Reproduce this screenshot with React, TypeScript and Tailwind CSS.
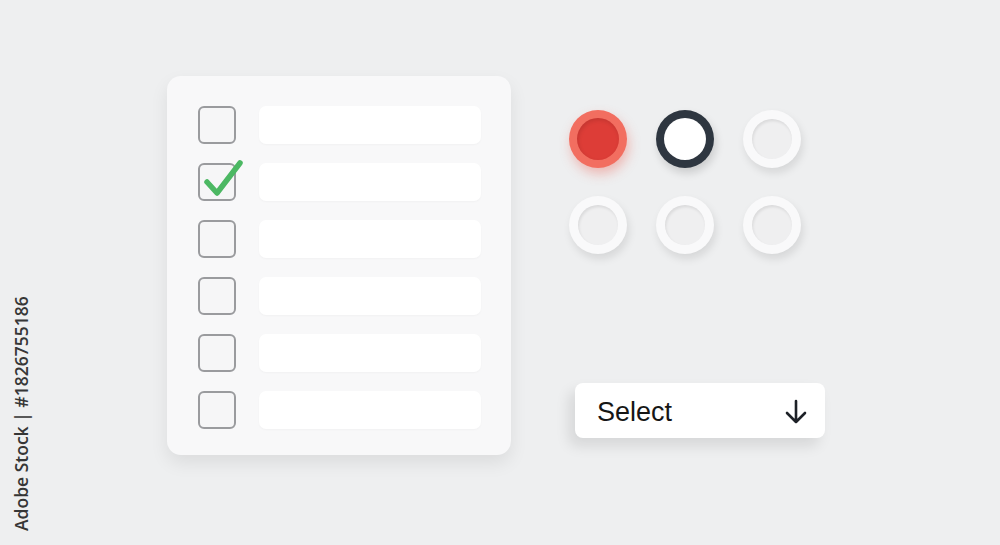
import React from "react";

const rows = [false, true, false, false, false, false];

function CheckRow({ checked }: { checked: boolean }) {
  return (
    <div className="flex items-center gap-[23px]">
      <div className="relative h-[38px] w-[38px] shrink-0 rounded-[6px] border-[2.5px] border-[#9a9b9e] bg-[#f6f6f7]">
        {checked && (
          <svg
            className="absolute left-[3px] top-[-6px] overflow-visible"
            width="44"
            height="40"
            viewBox="0 0 44 40"
          >
            <path
              d="M4 23 L14 34 L37 4"
              fill="none"
              stroke="#4cb863"
              strokeWidth="5.5"
              strokeLinecap="round"
              strokeLinejoin="round"
            />
          </svg>
        )}
      </div>
      <div className="h-[38px] w-[222px] rounded-[7px] bg-white shadow-[0_1px_2px_rgba(0,0,0,0.03)]" />
    </div>
  );
}

function Ring() {
  return (
    <div className="flex h-[58px] w-[58px] items-center justify-center rounded-full bg-[#f9f9fa] shadow-[2px_5px_8px_rgba(0,0,0,0.10)]">
      <div className="h-[40px] w-[40px] rounded-full bg-[#efeff0] shadow-[inset_1px_2px_3px_rgba(0,0,0,0.09)]" />
    </div>
  );
}

export default function App() {
  return (
    <div
      className="relative h-[545px] w-[1000px] overflow-hidden bg-[#eeeff0]"
      style={{ fontFamily: "'Liberation Sans', Arial, sans-serif" }}
    >
      <div className="flex pl-[167px] pt-[76px]">
        {/* checklist card */}
        <div className="flex h-[379px] w-[344px] flex-col gap-[19px] rounded-[14px] bg-[#f8f8f9] pl-[31px] pt-[30px] shadow-[0_8px_18px_rgba(0,0,0,0.08)]">
          {rows.map((c, i) => (
            <CheckRow key={i} checked={c} />
          ))}
        </div>

        {/* radios + select */}
        <div className="ml-[58px] flex flex-col pt-[34px]">
          <div className="grid grid-cols-[58px_58px_58px] gap-x-[29px] gap-y-[28px]">
            <div className="flex h-[58px] w-[58px] items-center justify-center rounded-full bg-[#f26e60] shadow-[2px_6px_12px_rgba(235,80,65,0.35)]">
              <div className="h-[42px] w-[42px] rounded-full bg-[#dd3d37] shadow-[inset_1px_2px_4px_rgba(0,0,0,0.12)]" />
            </div>
            <div className="flex h-[58px] w-[58px] items-center justify-center rounded-full bg-[#2e3640] shadow-[2px_5px_8px_rgba(0,0,0,0.15)]">
              <div className="h-[42px] w-[42px] rounded-full bg-white" />
            </div>
            <Ring />
            <Ring />
            <Ring />
            <Ring />
          </div>

          <div className="ml-[6px] mt-[129px] flex h-[55px] w-[250px] items-center justify-between rounded-[8px] bg-white pl-[22px] pr-[16px] pt-[3px] shadow-[-6px_8px_14px_rgba(0,0,0,0.10)]">
            <span className="text-[27px] leading-none text-[#161616]">Select</span>
            <svg width="26" height="28" viewBox="0 0 26 28">
              <path
                d="M13 3 V24 M4 15 L13 24 L22 15"
                fill="none"
                stroke="#1d2127"
                strokeWidth="2.6"
                strokeLinecap="round"
                strokeLinejoin="round"
              />
            </svg>
          </div>
        </div>
      </div>

      {/* stock credit */}
      <div
        className="absolute left-[9px] top-[531px] origin-top-left -rotate-90 whitespace-nowrap text-[17.5px] font-semibold leading-[24px] text-[#363636]"
        style={{ fontFamily: "'Open Sans', 'Noto Sans', sans-serif" }}
      >
        Adobe Stock | #1826755186
      </div>
    </div>
  );
}
